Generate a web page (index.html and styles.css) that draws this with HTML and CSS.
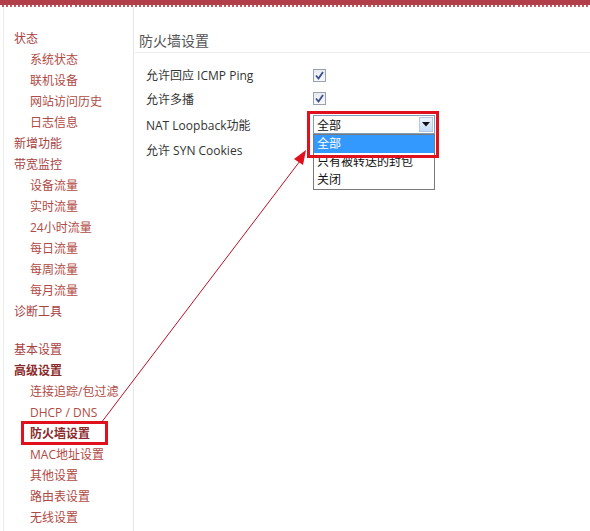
FILE: index.html
```html
<!DOCTYPE html>
<html lang="zh-CN">
<head>
  <meta charset="UTF-8" />
  <title>防火墙设置</title>
  <link rel="stylesheet" href="styles.css">
</head>
<body>

<div class="topbar"></div>

<div class="main">
  <!-- left menu -->
  <ul class="menu">
    <li class="top">状态</li>
    <li class="sub">系统状态</li>
    <li class="sub">联机设备</li>
    <li class="sub">网站访问历史</li>
    <li class="sub">日志信息</li>
    <li class="top">新增功能</li>
    <li class="top">带宽监控</li>
    <li class="sub">设备流量</li>
    <li class="sub">实时流量</li>
    <li class="sub">24小时流量</li>
    <li class="sub">每日流量</li>
    <li class="sub">每周流量</li>
    <li class="sub">每月流量</li>
    <li class="top">诊断工具</li>
    <li class="top spacer">基本设置</li>
    <li class="top current">高级设置</li>
    <li class="sub">连接追踪/包过滤</li>
    <li class="sub">DHCP / DNS</li>
    <li class="sub current">防火墙设置</li>
    <li class="sub">MAC地址设置</li>
    <li class="sub">其他设置</li>
    <li class="sub">路由表设置</li>
    <li class="sub">无线设置</li>
  </ul>

  <!-- settings -->
  <div class="content">
    <h2 class="title">防火墙设置</h2>
    <div class="form">
      <div class="row r1">
        <span class="label">允许回应 ICMP Ping</span>
        <span class="check"><svg width="9" height="9" viewBox="0 0 9 9"><path d="M1 4.5 L3.5 7.5 L8 1" fill="none" stroke="#3d4f8c" stroke-width="1.8"/></svg></span>
      </div>
      <div class="row r2">
        <span class="label">允许多播</span>
        <span class="check"><svg width="9" height="9" viewBox="0 0 9 9"><path d="M1 4.5 L3.5 7.5 L8 1" fill="none" stroke="#3d4f8c" stroke-width="1.8"/></svg></span>
      </div>
      <div class="row r3">
        <span class="label">NAT Loopback功能</span>
        <div class="select">
          <span class="value">全部</span>
          <span class="btn"><svg width="8" height="5" viewBox="0 0 8 5"><path d="M0 0 H8 L4 4.5 Z" fill="#111"/></svg></span>
          <ul class="options">
            <li class="picked">全部</li>
            <li>只有被转送的封包</li>
            <li>关闭</li>
          </ul>
        </div>
      </div>
      <div class="row r4">
        <span class="label">允许 SYN Cookies</span>
        <span class="check"></span>
      </div>
    </div>
  </div>
</div>

<!-- annotation drawn over the screenshot -->
<svg class="marks" width="590" height="531" viewBox="0 0 590 531">
  <rect x="22.5" y="422.5" width="84" height="21" fill="none" stroke="#e0101c" stroke-width="3"/>
  <rect x="308.5" y="112.5" width="129" height="44" fill="none" stroke="#e0101c" stroke-width="3"/>
  <line x1="101" y1="423" x2="300" y2="161" stroke="#b8102a" stroke-width="1"/>
  <polygon points="306,150 303,165 294,159" fill="#e0101c"/>
</svg>

</body>
</html>
```

FILE: styles.css
```css
html, body {
  margin: 0;
  padding: 0;
}

body {
  width: 590px;
  height: 531px;
  overflow: hidden;
  position: relative;
  background: #fff;
  font-family: "Open Sans", "Noto Sans CJK SC", sans-serif;
  font-size: 12px;
}

/* red strip with a dotted edge */
.topbar {
  height: 5px;
  background: #b13e48;
  border-bottom: 2px solid transparent;
  border-image: repeating-linear-gradient(90deg, #c25a62 0 2px, #fff 2px 4px) 2;
}

.main {
  display: flex;
  height: 524px;
}

.menu {
  list-style: none;
  margin: 0 0 0 3px;
  padding: 21px 0 0 10px;
  width: 119px;
  border-left: 1px solid #ececec;
  border-right: 1px solid #e6e6e6;
}
.menu li {
  height: 21px;
  line-height: 21px;
  color: #a8423f;
  white-space: nowrap;
}
.menu li.sub {
  padding-left: 16px;
  color: #b04a45;
}
.menu li.spacer {
  margin-top: 17px;
}
.menu li.current {
  font-weight: bold;
  color: #8a2b2b;
}

.content {
  flex: 1;
  padding-left: 1px;
}

.title {
  margin: 0;
  padding: 23px 0 0 4px;
  height: 22px;
  line-height: 22px;
  font-size: 14px;
  font-weight: normal;
  color: #555;
  border-bottom: 1px solid #ececec;
}

.form {
  padding: 10px 0 0 11px;
}
.row {
  display: flex;
  align-items: center;
}
.r1 { height: 24px; }
.r2 { height: 23px; }
.r3 { height: 29px; }
.r4 { height: 22px; }

.label {
  width: 167px;
  color: #333;
  white-space: nowrap;
}

.check {
  width: 11px;
  height: 11px;
  border: 1px solid #9aa0b0;
  background: linear-gradient(#e8eaf0, #f8f9fb);
  display: flex;
  align-items: center;
  justify-content: center;
}

.select {
  position: relative;
  width: 120px;
  height: 17px;
  border: 1px solid #7f9db9;
  background: #fff;
  display: flex;
  align-items: center;
}
.select .value {
  flex: 1;
  padding-left: 3px;
  color: #111;
}
.select .btn {
  width: 14px;
  height: 15px;
  margin-right: 1px;
  border: 1px solid #b3c8e4;
  box-sizing: border-box;
  background: linear-gradient(#eef4fc, #c6dcf5);
  display: flex;
  align-items: center;
  justify-content: center;
}

/* open dropdown list, over the next row */
.options {
  position: absolute;
  left: -1px;
  top: 18px;
  width: 120px;
  margin: 0;
  padding: 0;
  list-style: none;
  background: #fff;
  border: 1px solid #7a7a7a;
}
.options li {
  height: 18px;
  line-height: 18px;
  padding-left: 3px;
  color: #111;
}
.options li.picked {
  background: #3399ff;
  color: #fff;
}

.marks {
  position: absolute;
  left: 0;
  top: 0;
  pointer-events: none;
}
```
